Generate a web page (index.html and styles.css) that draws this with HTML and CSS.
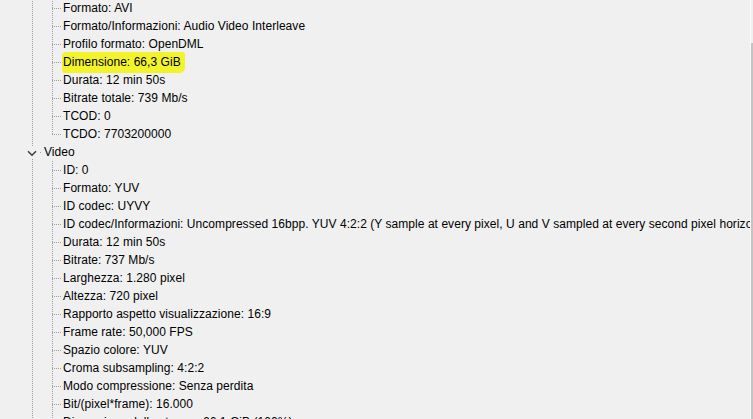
FILE: index.html
```html
<!DOCTYPE html>
<html lang="it">
<head>
  <meta charset="UTF-8">
  <title>MediaInfo - Albero</title>
  <link rel="stylesheet" href="styles.css">
</head>
<body>

  <div class="window">
    <div class="panel">
      <ul class="tree">
        <li class="section">
          <ul class="leaves">
            <li class="leaf">Formato: AVI</li>
            <li class="leaf">Formato/Informazioni: Audio Video Interleave</li>
            <li class="leaf">Profilo formato: OpenDML</li>
            <li class="leaf"><span class="mark">Dimensione: 66,3 GiB</span></li>
            <li class="leaf">Durata: 12 min 50s</li>
            <li class="leaf">Bitrate totale: 739 Mb/s</li>
            <li class="leaf">TCOD: 0</li>
            <li class="leaf last">TCDO: 7703200000</li>
          </ul>
        </li>
        <li class="section">
          <div class="head">
            <span class="toggle">
              <svg width="10" height="7" viewBox="0 0 10 7"><path d="M1 1.2 L5 5.2 L9 1.2" fill="none" stroke="#3c3c3c" stroke-width="1.5"/></svg>
            </span>
            <span class="stub"></span>
            <span class="label">Video</span>
          </div>
          <ul class="leaves">
            <li class="leaf">ID: 0</li>
            <li class="leaf">Formato: YUV</li>
            <li class="leaf">ID codec: UYVY</li>
            <li class="leaf">ID codec/Informazioni: Uncompressed 16bpp. YUV 4:2:2 (Y sample at every pixel, U and V sampled at every second pixel horizontally on each line)</li>
            <li class="leaf">Durata: 12 min 50s</li>
            <li class="leaf">Bitrate: 737 Mb/s</li>
            <li class="leaf">Larghezza: 1.280 pixel</li>
            <li class="leaf">Altezza: 720 pixel</li>
            <li class="leaf">Rapporto aspetto visualizzazione: 16:9</li>
            <li class="leaf">Frame rate: 50,000 FPS</li>
            <li class="leaf">Spazio colore: YUV</li>
            <li class="leaf">Croma subsampling: 4:2:2</li>
            <li class="leaf">Modo compressione: Senza perdita</li>
            <li class="leaf">Bit/(pixel*frame): 16.000</li>
            <li class="leaf">Dimensione dello stream: 66,1 GiB (100%)</li>
            <li class="leaf last">Scrittura libreria: Lavc</li>
          </ul>
        </li>
      </ul>
    </div>
    <div class="edge"></div>
  </div>

</body>
</html>
```

FILE: styles.css
```css
* {
  box-sizing: border-box;
  margin: 0;
  padding: 0;
}

body {
  font-family: "Liberation Sans", Arial, sans-serif;
  font-size: 12px;
  letter-spacing: 0.05px;
  color: #000;
  background: #f0f0f0;
  overflow: hidden;
  height: 419px;
}

.window {
  display: flex;
  height: 100%;
}

.panel {
  width: 750px;
  overflow: hidden;
}

.edge {
  width: 3px;
  border-left: 1px solid #fafafa;
  background: linear-gradient(to bottom, #f0f0f0 0 43px, #c4c4c4 43px);
}

/* tree */
.tree {
  list-style: none;
  margin-top: -1px;
  margin-left: 32px;
  background: repeating-linear-gradient(to bottom, #a0a0a0 0 1px, transparent 1px 2px) 0 0 / 1px 100% no-repeat;
}

.leaves {
  list-style: none;
  margin-left: 20px;
}

.leaf {
  height: 18px;
  line-height: 18px;
  padding-left: 11px;
  white-space: nowrap;
  background:
    repeating-linear-gradient(to bottom, #a0a0a0 0 1px, transparent 1px 2px) 0 0 / 1px 100% no-repeat,
    repeating-linear-gradient(to right, #a0a0a0 0 1px, transparent 1px 2px) 0 9px / 9px 1px no-repeat;
}

.leaf.last {
  background:
    repeating-linear-gradient(to bottom, #a0a0a0 0 1px, transparent 1px 2px) 0 0 / 1px 10px no-repeat,
    repeating-linear-gradient(to right, #a0a0a0 0 1px, transparent 1px 2px) 0 9px / 9px 1px no-repeat;
}

.mark {
  background: #f3f32c;
  padding: 3px 4px 4px 1px;
  margin-left: -1px;
  border-radius: 4px 3px 5px 3px;
}

.head {
  display: flex;
  align-items: center;
  height: 18px;
}

.toggle {
  display: flex;
  align-items: center;
  justify-content: center;
  width: 12px;
  height: 12px;
  margin-left: -6px;
  padding-top: 2px;
  background: #f0f0f0;
}

.stub {
  width: 5px;
  height: 1px;
  background: repeating-linear-gradient(to right, transparent 0 2px, #a0a0a0 2px 3px);
}

.label {
  padding-left: 1px;
  line-height: 18px;
}
```
